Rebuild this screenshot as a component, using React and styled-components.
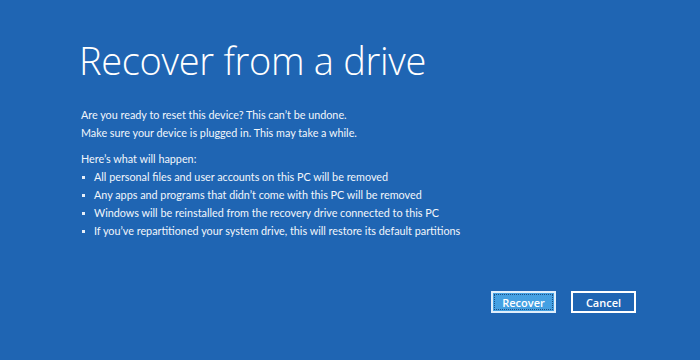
import React from 'react'
import styled, { createGlobalStyle } from 'styled-components'

const Global = createGlobalStyle`
  html, body { margin: 0; padding: 0; }
  body {
    background: #1f65b3;
    font-family: "Open Sans", "Noto Sans", "Liberation Sans", sans-serif;
  }
`

const Screen = styled.div`
  width: 700px;
  height: 360px;
  background: #1f65b3;
  color: #fff;
  display: flex;
  flex-direction: column;
  padding: 34px 64px 47px 79px;
  box-sizing: border-box;
`

const Title = styled.h1`
  margin: 0 0 20px;
  font-size: 38px;
  font-weight: 300;
  letter-spacing: -0.3px;
  line-height: 52px;
`

const Body = styled.div`
  font-family: Lato, "Noto Sans", sans-serif;
  font-size: 10.8px;
  line-height: 18px;
  color: #f2f6fb;
  padding-left: 2px;
  flex: 1;
`

const Para = styled.p`
  margin: 0 0 ${p => p.$gap || 0}px;
`

const List = styled.ul`
  margin: 0;
  padding: 0;
  list-style: none;
`

const Item = styled.li`
  display: flex;
  align-items: center;
  gap: 9px;
  &::before {
    content: "";
    width: 3px;
    height: 3px;
    background: #e6eef8;
    flex: none;
    margin-left: 1px;
  }
`

const Actions = styled.div`
  display: flex;
  justify-content: flex-end;
  gap: 15px;
`

const Button = styled.button`
  width: 65px;
  height: 22px;
  box-sizing: border-box;
  border: 2px solid #fff;
  background: ${p => (p.$primary ? '#44a0e2' : '#1f65b3')};
  color: #fff;
  font-family: inherit;
  font-size: 11px;
  font-weight: 600;
  padding: 0;
  position: relative;
  ${p =>
    p.$primary &&
    `
    border-color: #dfeefb;
    &::after {
      content: "";
      position: absolute;
      inset: 1px;
      border: 1px dotted #1c4f86;
    }
  `}
`

export default function App() {
  return (
    <Screen>
      <Global />
      <Title>Recover from a drive</Title>
      <Body>
        <Para>Are you ready to reset this device? This can’t be undone.</Para>
        <Para $gap={8}>Make sure your device is plugged in. This may take a while.</Para>
        <Para>Here’s what will happen:</Para>
        <List>
          <Item>All personal files and user accounts on this PC will be removed</Item>
          <Item>Any apps and programs that didn’t come with this PC will be removed</Item>
          <Item>Windows will be reinstalled from the recovery drive connected to this PC</Item>
          <Item>If you’ve repartitioned your system drive, this will restore its default partitions</Item>
        </List>
      </Body>
      <Actions>
        <Button $primary>Recover</Button>
        <Button>Cancel</Button>
      </Actions>
    </Screen>
  )
}
